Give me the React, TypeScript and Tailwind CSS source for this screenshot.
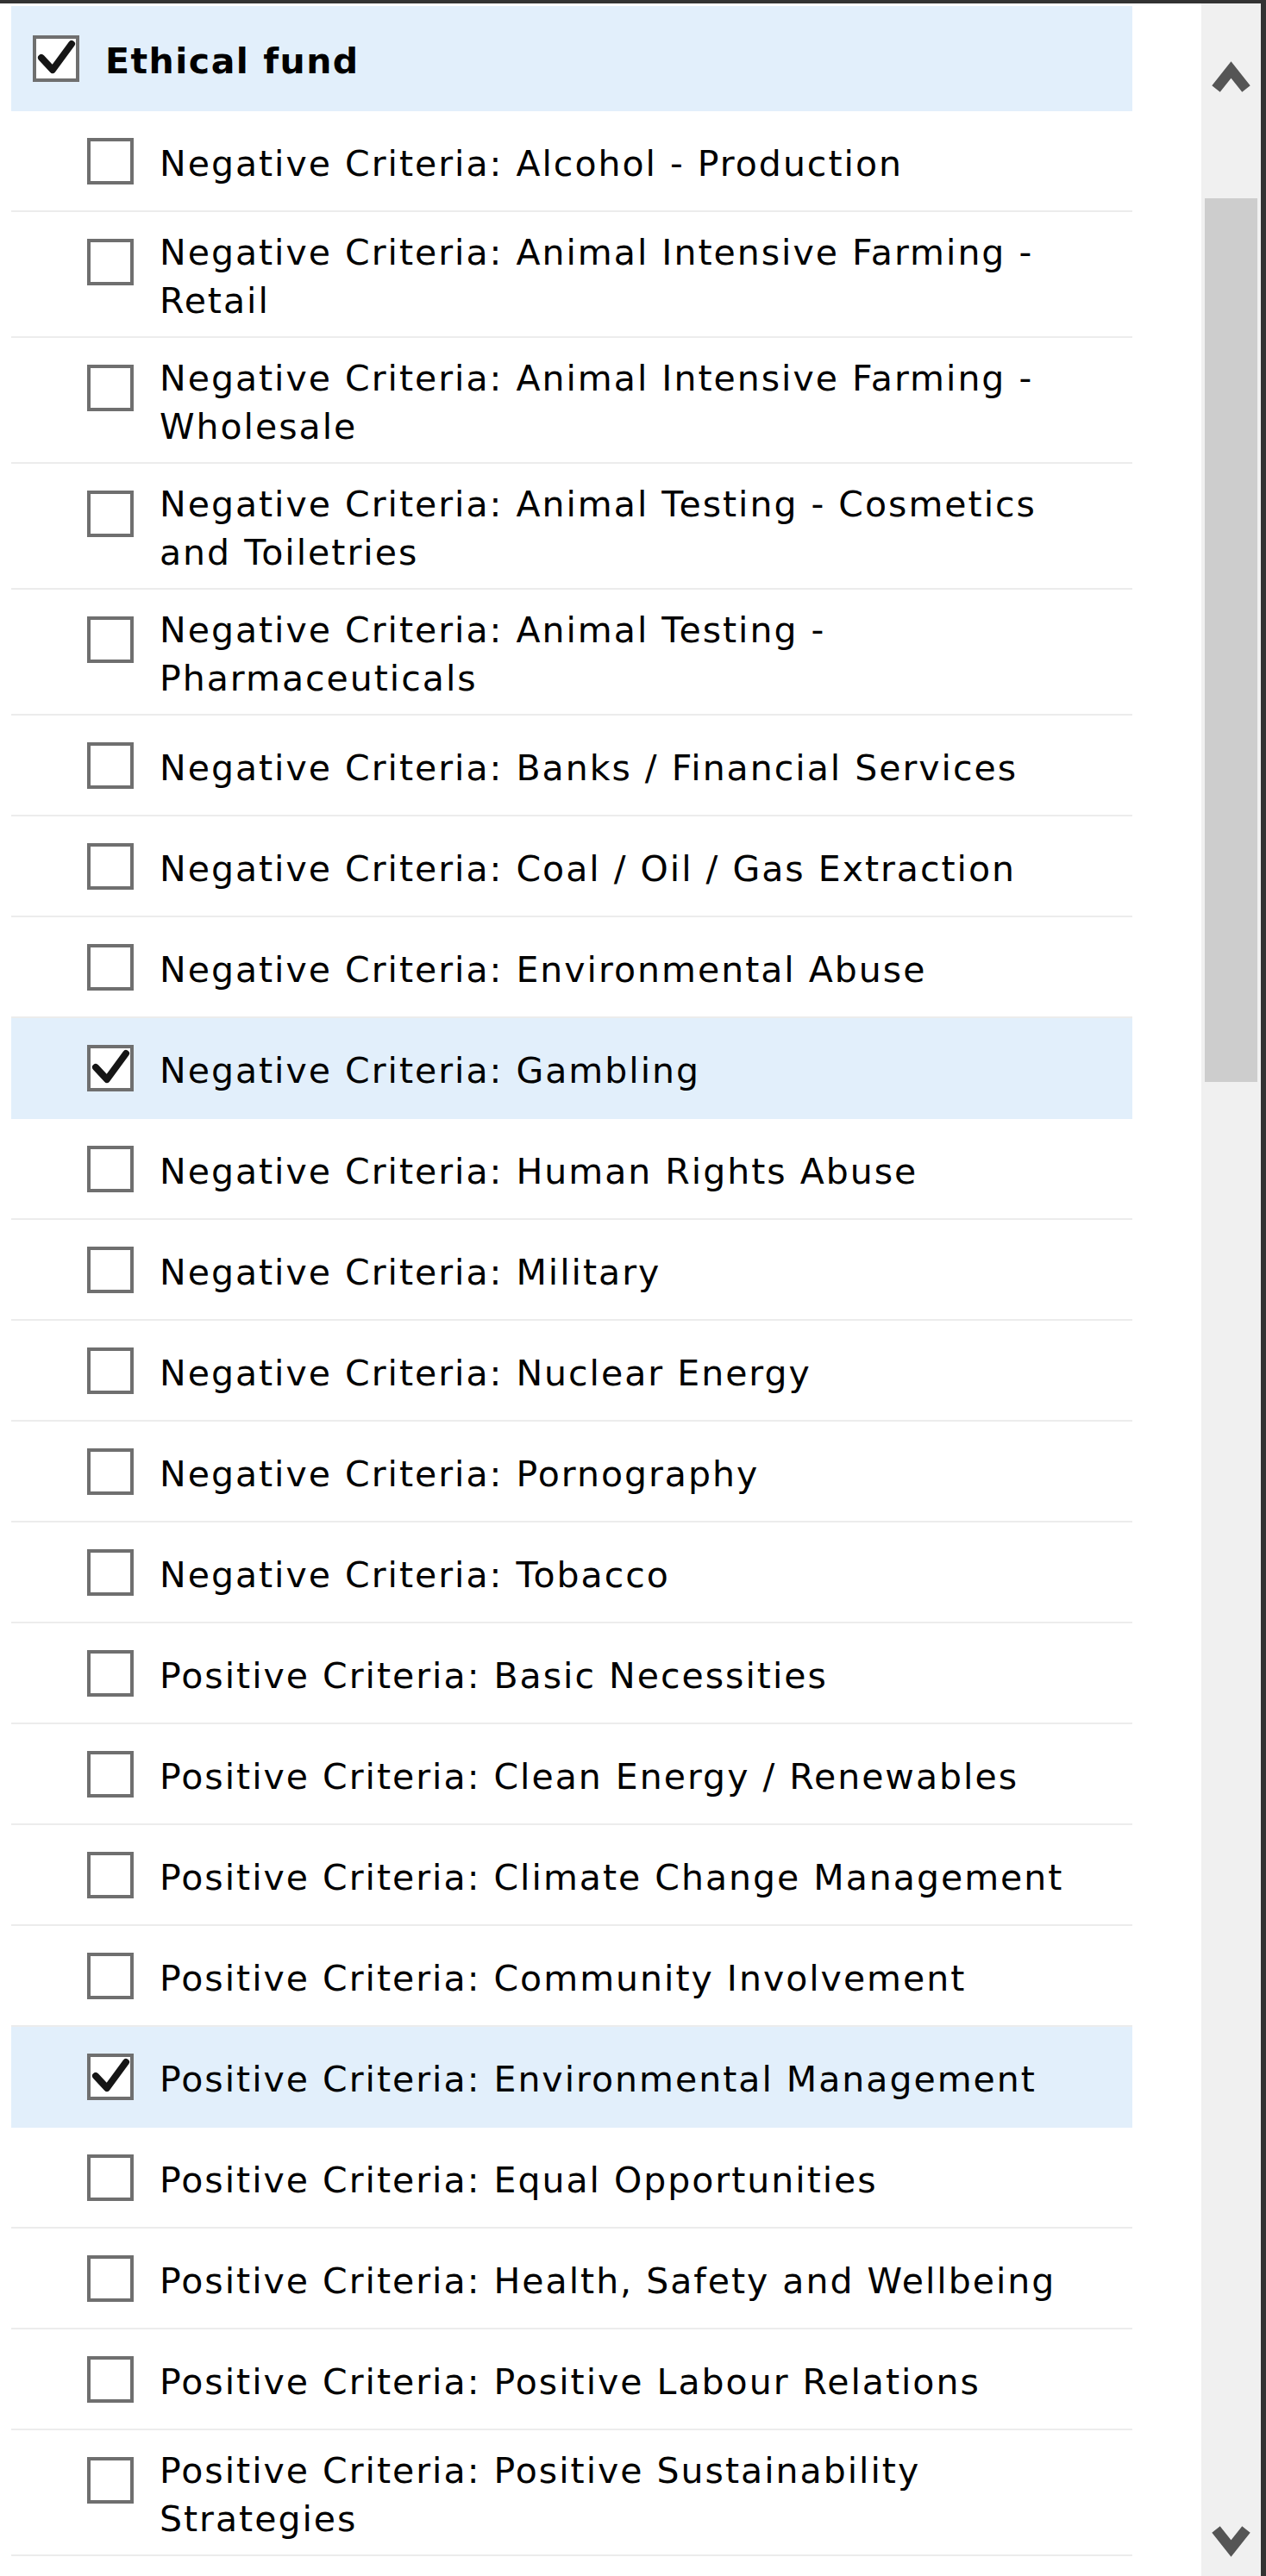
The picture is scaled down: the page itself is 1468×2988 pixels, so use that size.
import React from "react";

type Item = { label: string; checked?: boolean };

const items: Item[] = [
  { label: "Negative Criteria: Alcohol - Production" },
  { label: "Negative Criteria: Animal Intensive Farming - Retail" },
  { label: "Negative Criteria: Animal Intensive Farming - Wholesale" },
  { label: "Negative Criteria: Animal Testing - Cosmetics and Toiletries" },
  { label: "Negative Criteria: Animal Testing - Pharmaceuticals" },
  { label: "Negative Criteria: Banks / Financial Services" },
  { label: "Negative Criteria: Coal / Oil / Gas Extraction" },
  { label: "Negative Criteria: Environmental Abuse" },
  { label: "Negative Criteria: Gambling", checked: true },
  { label: "Negative Criteria: Human Rights Abuse" },
  { label: "Negative Criteria: Military" },
  { label: "Negative Criteria: Nuclear Energy" },
  { label: "Negative Criteria: Pornography" },
  { label: "Negative Criteria: Tobacco" },
  { label: "Positive Criteria: Basic Necessities" },
  { label: "Positive Criteria: Clean Energy / Renewables" },
  { label: "Positive Criteria: Climate Change Management" },
  { label: "Positive Criteria: Community Involvement" },
  { label: "Positive Criteria: Environmental Management", checked: true },
  { label: "Positive Criteria: Equal Opportunities" },
  { label: "Positive Criteria: Health, Safety and Wellbeing" },
  { label: "Positive Criteria: Positive Labour Relations" },
  { label: "Positive Criteria: Positive Sustainability Strategies" },
];

function CheckBox({ checked }: { checked?: boolean }) {
  return (
    <svg width="54" height="54" viewBox="0 0 54 54" className="shrink-0">
      <rect x="2" y="2" width="50" height="50" fill="#fff" stroke="#6f6f6f" strokeWidth="4" />
      {checked && (
        <path
          d="M10 26 L23 40 L45 10"
          fill="none"
          stroke="#151515"
          strokeWidth="8"
          strokeLinejoin="round"
          strokeLinecap="round"
        />
      )}
    </svg>
  );
}

function Chevron({ down }: { down?: boolean }) {
  return (
    <svg width="47" height="38" viewBox="0 0 47 38" className="mx-auto block">
      <polyline
        points={down ? "6,6 23.5,28 41,6" : "6,32 23.5,10 41,32"}
        fill="none"
        stroke="#555"
        strokeWidth="12"
        strokeLinejoin="miter"
      />
    </svg>
  );
}

export default function App() {
  return (
    <div className="flex h-[2988px] w-[1468px] overflow-hidden border-t-[4px] border-r-[6px] border-[#333] bg-white font-['DejaVu_Sans',sans-serif] text-[41px] leading-[56px] tracking-[2px] text-black">
      <div className="w-[1313px] shrink-0 pt-[3px] pl-[13px]">
        <div className="flex h-[122px] items-center bg-[#e2effb] pl-[25px]">
          <CheckBox checked />
          <span className="ml-[30px] pt-[6px] font-bold tracking-[1.5px]">Ethical fund</span>
        </div>
        {items.map((item) => (
          <div
            key={item.label}
            className={
              item.checked
                ? "flex min-h-[117px] items-center border-b-2 border-[#e2effb] bg-[#e2effb] pl-[88px] pr-[48px]"
                : "flex min-h-[117px] items-center border-b-2 border-[#ececec] pl-[88px] pr-[48px]"
            }
          >
            <div className="mt-[31px] self-start">
              <CheckBox checked={item.checked} />
            </div>
            <span className="ml-[30px] pt-[19px] pb-[13px]">{item.label}</span>
          </div>
        ))}
      </div>
      <div className="ml-[80px] flex flex-1 flex-col bg-[#f0f0f0] pt-[67px]">
        <Chevron />
        <div className="mx-[4px] mt-[121px] h-[1025px] bg-[#cdcdcd]" />
        <div className="mt-auto mb-[22px]">
          <Chevron down />
        </div>
      </div>
    </div>
  );
}
